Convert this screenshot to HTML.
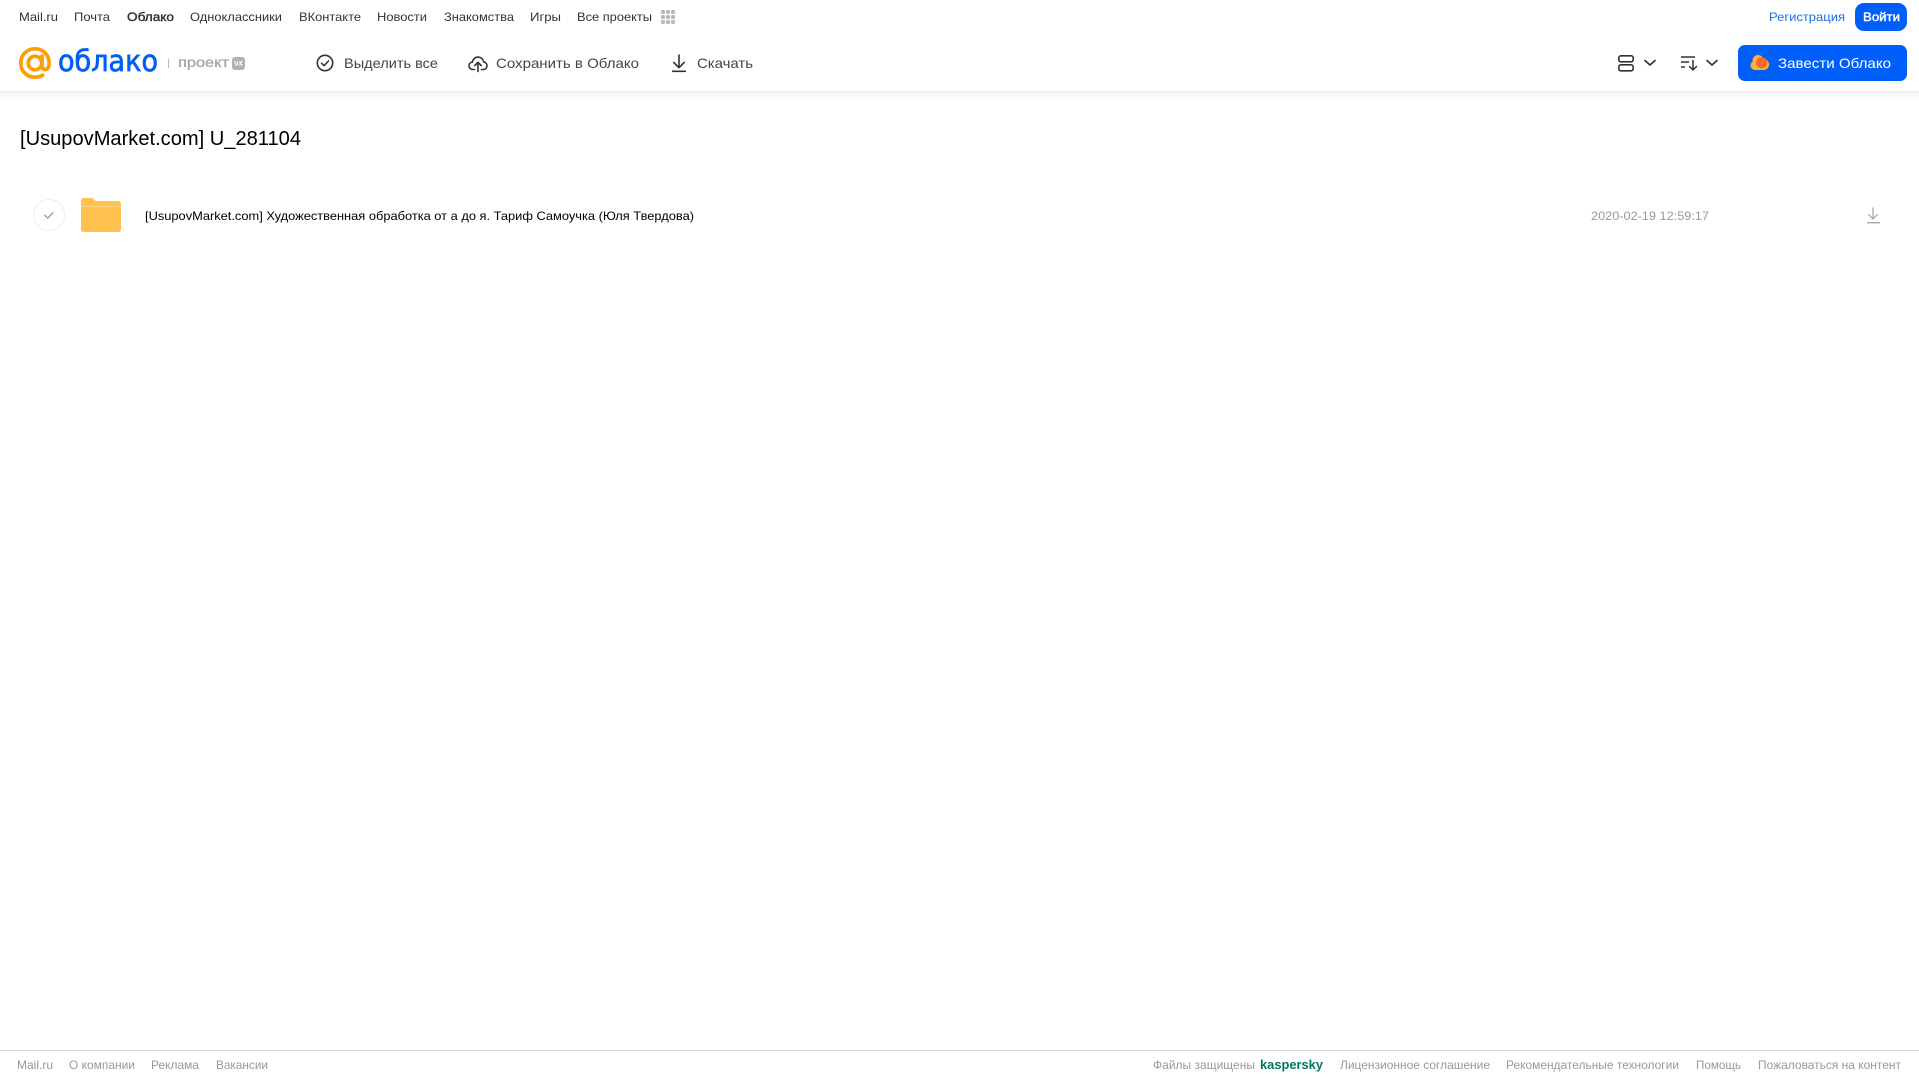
<!DOCTYPE html>
<html lang="ru">
<head>
<meta charset="utf-8">
<title>[UsupovMarket.com] U_281104</title>
<style>
html,body{margin:0;padding:0;background:#fff;width:1919px;height:1079px;overflow:hidden}
svg{display:block;position:absolute;left:0;top:0}
text{font-family:"Liberation Sans",Arial,sans-serif;white-space:pre}
.n{font-size:12px;fill:#333}
.a{font-size:14px;fill:#444}
.f{font-size:12px;fill:#999}
</style>
</head>
<body>
<svg width="1919" height="1079" viewBox="0 0 1919 1079" xmlns="http://www.w3.org/2000/svg">
<defs>
<linearGradient id="sh" x1="0" y1="0" x2="0" y2="1"><stop offset="0" stop-color="#f0f0f0"/><stop offset="1" stop-color="#fff"/></linearGradient>
</defs>
<rect x="0" y="91" width="1919" height="8" fill="url(#sh)"/>

<!-- top nav -->
<text class="n" x="19" y="21" textLength="39" lengthAdjust="spacingAndGlyphs">Mail.ru</text>
<text class="n" x="74" y="21" textLength="36" lengthAdjust="spacingAndGlyphs">Почта</text>
<text class="n" x="127" y="21" textLength="47" lengthAdjust="spacingAndGlyphs" stroke="#333" stroke-width=".4">Облако</text>
<text class="n" x="190" y="21" textLength="92" lengthAdjust="spacingAndGlyphs">Одноклассники</text>
<text class="n" x="299" y="21" textLength="62" lengthAdjust="spacingAndGlyphs">ВКонтакте</text>
<text class="n" x="377" y="21" textLength="50" lengthAdjust="spacingAndGlyphs">Новости</text>
<text class="n" x="444" y="21" textLength="70" lengthAdjust="spacingAndGlyphs">Знакомства</text>
<text class="n" x="530" y="21" textLength="31" lengthAdjust="spacingAndGlyphs">Игры</text>
<text class="n" x="577" y="21" textLength="75" lengthAdjust="spacingAndGlyphs">Все проекты</text>
<g fill="#b8b8b8">
<rect x="661" y="10" width="4" height="4" rx="1.500"/><rect x="666" y="10" width="4" height="4" rx="1.500"/><rect x="671" y="10" width="4" height="4" rx="1.500"/>
<rect x="661" y="15" width="4" height="4" rx="1.500"/><rect x="666" y="15" width="4" height="4" rx="1.500"/><rect x="671" y="15" width="4" height="4" rx="1.500"/>
<rect x="661" y="20" width="4" height="4" rx="1.500"/><rect x="666" y="20" width="4" height="4" rx="1.500"/><rect x="671" y="20" width="4" height="4" rx="1.500"/>
</g>
<text x="1769" y="21" font-size="12" fill="#1a6fe0" textLength="76" lengthAdjust="spacingAndGlyphs">Регистрация</text>
<rect x="1855" y="3" width="52" height="28" rx="9" fill="#005ff9"/>
<text x="1863" y="21" font-size="12" fill="#fff" stroke="#fff" stroke-width=".4" textLength="37" lengthAdjust="spacingAndGlyphs">Войти</text>

<!-- logo -->
<g fill="none" stroke="#ff9e00">
<circle cx="35" cy="63" r="6.800" stroke-width="3.700"/>
<path d="M42 56v9.500c0 2.600 1.500 4 3.400 4 2.400 0 3.700-2.600 3.700-6.500 0-8.200-6-14.200-14.100-14.200S20.800 54.800 20.800 63s6.100 14.200 14.200 14.200c3 0 5.500-.7 7.700-2" stroke-width="3.700" stroke-linecap="round"/>
</g>
<text x="58" y="71" style="font-family:'DejaVu Sans',sans-serif" font-size="29" fill="#005ff9" stroke="#005ff9" stroke-width=".7" textLength="100" lengthAdjust="spacingAndGlyphs">облако</text>
<rect x="168" y="59" width="1" height="9" fill="#bbb"/>
<text x="178" y="67" font-size="14" fill="#a8a8a8" stroke="#a8a8a8" stroke-width=".35" textLength="51" lengthAdjust="spacingAndGlyphs">проект</text>
<rect x="232" y="57" width="13" height="13" rx="3" fill="#b2b2b2"/>
<path d="M234.500 61l1.600 4h1.200v-4M242.500 61l-2.300 2 2.300 2.500M240 61v4.500" fill="none" stroke="#fff" stroke-width="1"/>

<!-- actions -->
<circle cx="325" cy="63" r="7.700" fill="none" stroke="#333" stroke-width="1.600"/>
<path d="M321.500 63.200l2.600 2.500 4.500-4.800" fill="none" stroke="#333" stroke-width="1.500" stroke-linecap="round" stroke-linejoin="round"/>
<text class="a" x="344" y="68" textLength="94" lengthAdjust="spacingAndGlyphs">Выделить все</text>

<path d="M474.500 69.500h-1.700c-2.300 0-3.800-1.700-3.800-3.700 0-2 1.400-3.500 3.300-3.700.5-2.900 2.900-5 5.700-5 2.900 0 5.200 2 5.700 4.800 2 .3 3.300 1.900 3.300 3.900 0 2-1.500 3.700-3.700 3.700h-1.800" fill="none" stroke="#333" stroke-width="1.600" stroke-linecap="round"/>
<path d="M478 71.500v-9M474.800 65.500l3.200-3.200 3.200 3.200" fill="none" stroke="#333" stroke-width="1.600" stroke-linecap="round" stroke-linejoin="round"/>
<text class="a" x="496" y="68" textLength="143" lengthAdjust="spacingAndGlyphs">Сохранить в Облако</text>

<path d="M679 55v12.500M673.800 62.500l5.200 5.200 5.200-5.200" fill="none" stroke="#333" stroke-width="1.600" stroke-linecap="round" stroke-linejoin="round"/>
<rect x="672" y="70.500" width="14" height="1.600" fill="#333"/>
<text class="a" x="697" y="68" textLength="56" lengthAdjust="spacingAndGlyphs">Скачать</text>

<!-- right tools -->
<rect x="1618.800" y="55.800" width="14.400" height="6" rx="2" fill="none" stroke="#333" stroke-width="1.600"/>
<rect x="1618.800" y="64.800" width="14.400" height="6" rx="2" fill="none" stroke="#333" stroke-width="1.600"/>
<path d="M1645 60.500l5 4.500 5-4.500" fill="none" stroke="#333" stroke-width="1.700" stroke-linecap="round" stroke-linejoin="round"/>
<path d="M1681 57h14M1681 62h8M1681 67h4" stroke="#333" stroke-width="1.400" fill="none"/>
<path d="M1693 60.500v9M1689.500 66.500l3.500 3.500 3.500-3.500" fill="none" stroke="#333" stroke-width="1.500" stroke-linecap="round" stroke-linejoin="round"/>
<path d="M1707 60.500l5 4.500 5-4.500" fill="none" stroke="#333" stroke-width="1.700" stroke-linecap="round" stroke-linejoin="round"/>

<rect x="1738" y="45" width="169" height="36" rx="7" fill="#005ff9"/>
<g fill="#ffb13d"><circle cx="1758" cy="60.500" r="5.500"/><circle cx="1755" cy="65.500" r="4.500"/><circle cx="1763.500" cy="64.500" r="5.500"/><rect x="1755" y="62" width="9" height="8"/></g>
<circle cx="1761.700" cy="62.700" r="5.500" fill="#f2692a"/>
<text x="1778" y="68" font-size="14" fill="#fff" textLength="113" lengthAdjust="spacingAndGlyphs">Завести Облако</text>

<!-- title -->
<text x="20" y="145" font-size="20" fill="#000" textLength="281" lengthAdjust="spacingAndGlyphs">[UsupovMarket.com] U_281104</text>

<!-- row -->
<circle cx="49" cy="215" r="15.500" fill="#fff" stroke="#eee" stroke-width="1"/>
<path d="M44.800 215.200l3 2.900 5.200-5.400" fill="none" stroke="#999" stroke-width="1.300" stroke-linecap="round" stroke-linejoin="round"/>
<path d="M81 201c0-1.700 1.300-3 3-3h7c1.500 0 2.500.6 3.300 1.600l1.300 1.400H118c1.700 0 3 1.300 3 3v5H81z" fill="#ffc24d"/>
<rect x="81" y="206" width="40" height="26" rx="2.500" fill="#ffc04e"/>
<rect x="81" y="206" width="40" height="1" fill="#ffd27f"/>
<text x="145" y="220" font-size="12" fill="#000" textLength="549" lengthAdjust="spacingAndGlyphs">[UsupovMarket.com] Художественная обработка от а до я. Тариф Самоучка (Юля Твердова)</text>
<text x="1591" y="220" font-size="12" fill="#999" textLength="118" lengthAdjust="spacingAndGlyphs">2020-02-19 12:59:17</text>
<path d="M1873 207.500v11M1868.500 214.500l4.500 4.500 4.500-4.500" fill="none" stroke="#aaa" stroke-width="1.300"/>
<rect x="1867" y="222" width="13" height="1.400" fill="#aaa"/>

<!-- footer -->
<rect x="0" y="1050" width="1919" height="1" fill="#d8d8d8"/>
<text class="f" x="17" y="1069" textLength="36" lengthAdjust="spacingAndGlyphs">Mail.ru</text>
<text class="f" x="69" y="1069" textLength="66" lengthAdjust="spacingAndGlyphs">О компании</text>
<text class="f" x="151" y="1069" textLength="48" lengthAdjust="spacingAndGlyphs">Реклама</text>
<text class="f" x="216" y="1069" textLength="52" lengthAdjust="spacingAndGlyphs">Вакансии</text>
<text class="f" x="1153" y="1069" textLength="102" lengthAdjust="spacingAndGlyphs">Файлы защищены</text>
<text x="1260" y="1069" font-size="13" fill="#00775e" style="font-weight:700" textLength="63" lengthAdjust="spacingAndGlyphs">kaspersky</text>
<text class="f" x="1340" y="1069" textLength="150" lengthAdjust="spacingAndGlyphs">Лицензионное соглашение</text>
<text class="f" x="1506" y="1069" textLength="173" lengthAdjust="spacingAndGlyphs">Рекомендательные технологии</text>
<text class="f" x="1696" y="1069" textLength="45" lengthAdjust="spacingAndGlyphs">Помощь</text>
<text class="f" x="1758" y="1069" textLength="143" lengthAdjust="spacingAndGlyphs">Пожаловаться на контент</text>
</svg>
</body>
</html>
